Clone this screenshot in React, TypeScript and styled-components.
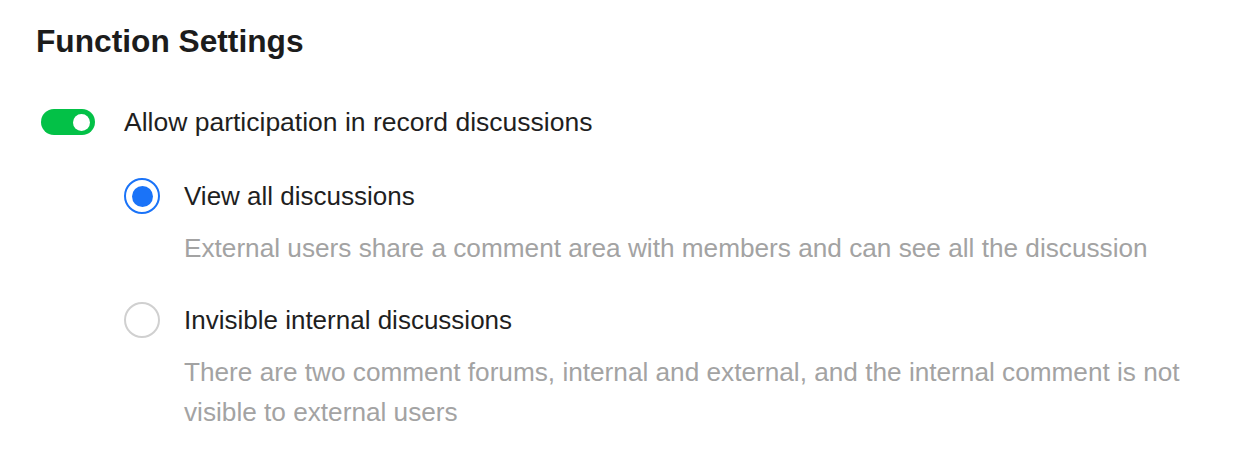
import React, { useState } from "react";
import styled, { createGlobalStyle } from "styled-components";

const GlobalStyle = createGlobalStyle`
  html, body {
    margin: 0;
    padding: 0;
    background: #ffffff;
  }
  body {
    font-family: "Liberation Sans", Helvetica, Arial, sans-serif;
    -webkit-font-smoothing: antialiased;
  }
`;

interface Option {
  key: string;
  label: string;
  desc: string;
}

const options: Option[] = [
  {
    key: "all",
    label: "View all discussions",
    desc: "External users share a comment area with members and can see all the discussion",
  },
  {
    key: "internal",
    label: "Invisible internal discussions",
    desc: "There are two comment forums, internal and external, and the internal comment is not visible to external users",
  },
];

const App = () => {
  const [enabled, setEnabled] = useState(true);
  const [selected, setSelected] = useState("all");

  return (
    <>
      <GlobalStyle />
      <Panel>
        <Title>Function Settings</Title>
        <SwitchRow>
          <Switch
            type="button"
            $on={enabled}
            aria-pressed={enabled}
            onClick={() => setEnabled(!enabled)}
          >
            <Knob />
          </Switch>
          <SwitchLabel>Allow participation in record discussions</SwitchLabel>
        </SwitchRow>
        <OptionList>
          {options.map((opt) => (
            <OptionItem key={opt.key}>
              <RadioRow onClick={() => setSelected(opt.key)}>
                <Radio $checked={selected === opt.key} />
                <RadioLabel>{opt.label}</RadioLabel>
              </RadioRow>
              <Desc>{opt.desc}</Desc>
            </OptionItem>
          ))}
        </OptionList>
      </Panel>
    </>
  );
};

export default App;

const Panel = styled.div`
  padding: 17px 38px 0 36px;
  display: flex;
  flex-direction: column;
`;

const Title = styled.h2`
  margin: 0;
  font-size: 31.7px;
  line-height: 48px;
  font-weight: 700;
  color: #1c1c1c;
`;

const SwitchRow = styled.div`
  margin-top: 37px;
  display: flex;
  align-items: center;
  height: 40px;
  padding-left: 5px;
`;

const Switch = styled.button<{ $on: boolean }>`
  width: 54px;
  height: 26px;
  border: none;
  padding: 0 5px;
  border-radius: 13px;
  background: ${(p) => (p.$on ? "#03c147" : "#d4d4d4")};
  display: flex;
  align-items: center;
  justify-content: ${(p) => (p.$on ? "flex-end" : "flex-start")};
  cursor: pointer;
  flex-shrink: 0;
`;

const Knob = styled.span`
  width: 17px;
  height: 17px;
  border-radius: 50%;
  background: #ffffff;
`;

const SwitchLabel = styled.span`
  margin-left: 29px;
  font-size: 26.5px;
  line-height: 40px;
  color: #1f1f1f;
`;

const OptionList = styled.div`
  margin-top: 34px;
  padding-left: 88px;
  display: flex;
  flex-direction: column;
  gap: 32px;
`;

const OptionItem = styled.div`
  display: flex;
  flex-direction: column;
`;

const RadioRow = styled.div`
  display: flex;
  align-items: center;
  height: 40px;
  cursor: pointer;
`;

const Radio = styled.span<{ $checked: boolean }>`
  box-sizing: border-box;
  width: 36px;
  height: 36px;
  border-radius: 50%;
  border: 2px solid ${(p) => (p.$checked ? "#1a73f8" : "#d0d0d0")};
  display: flex;
  align-items: center;
  justify-content: center;
  flex-shrink: 0;

  &::after {
    content: "";
    width: 21px;
    height: 21px;
    border-radius: 50%;
    background: #1a73f8;
    display: ${(p) => (p.$checked ? "block" : "none")};
  }
`;

const RadioLabel = styled.span`
  margin-left: 24px;
  font-size: 26px;
  line-height: 40px;
  color: #1f1f1f;
`;

const Desc = styled.p`
  margin: 12px 0 0 60px;
  font-size: 26.2px;
  line-height: 40px;
  color: #a3a3a3;
`;
